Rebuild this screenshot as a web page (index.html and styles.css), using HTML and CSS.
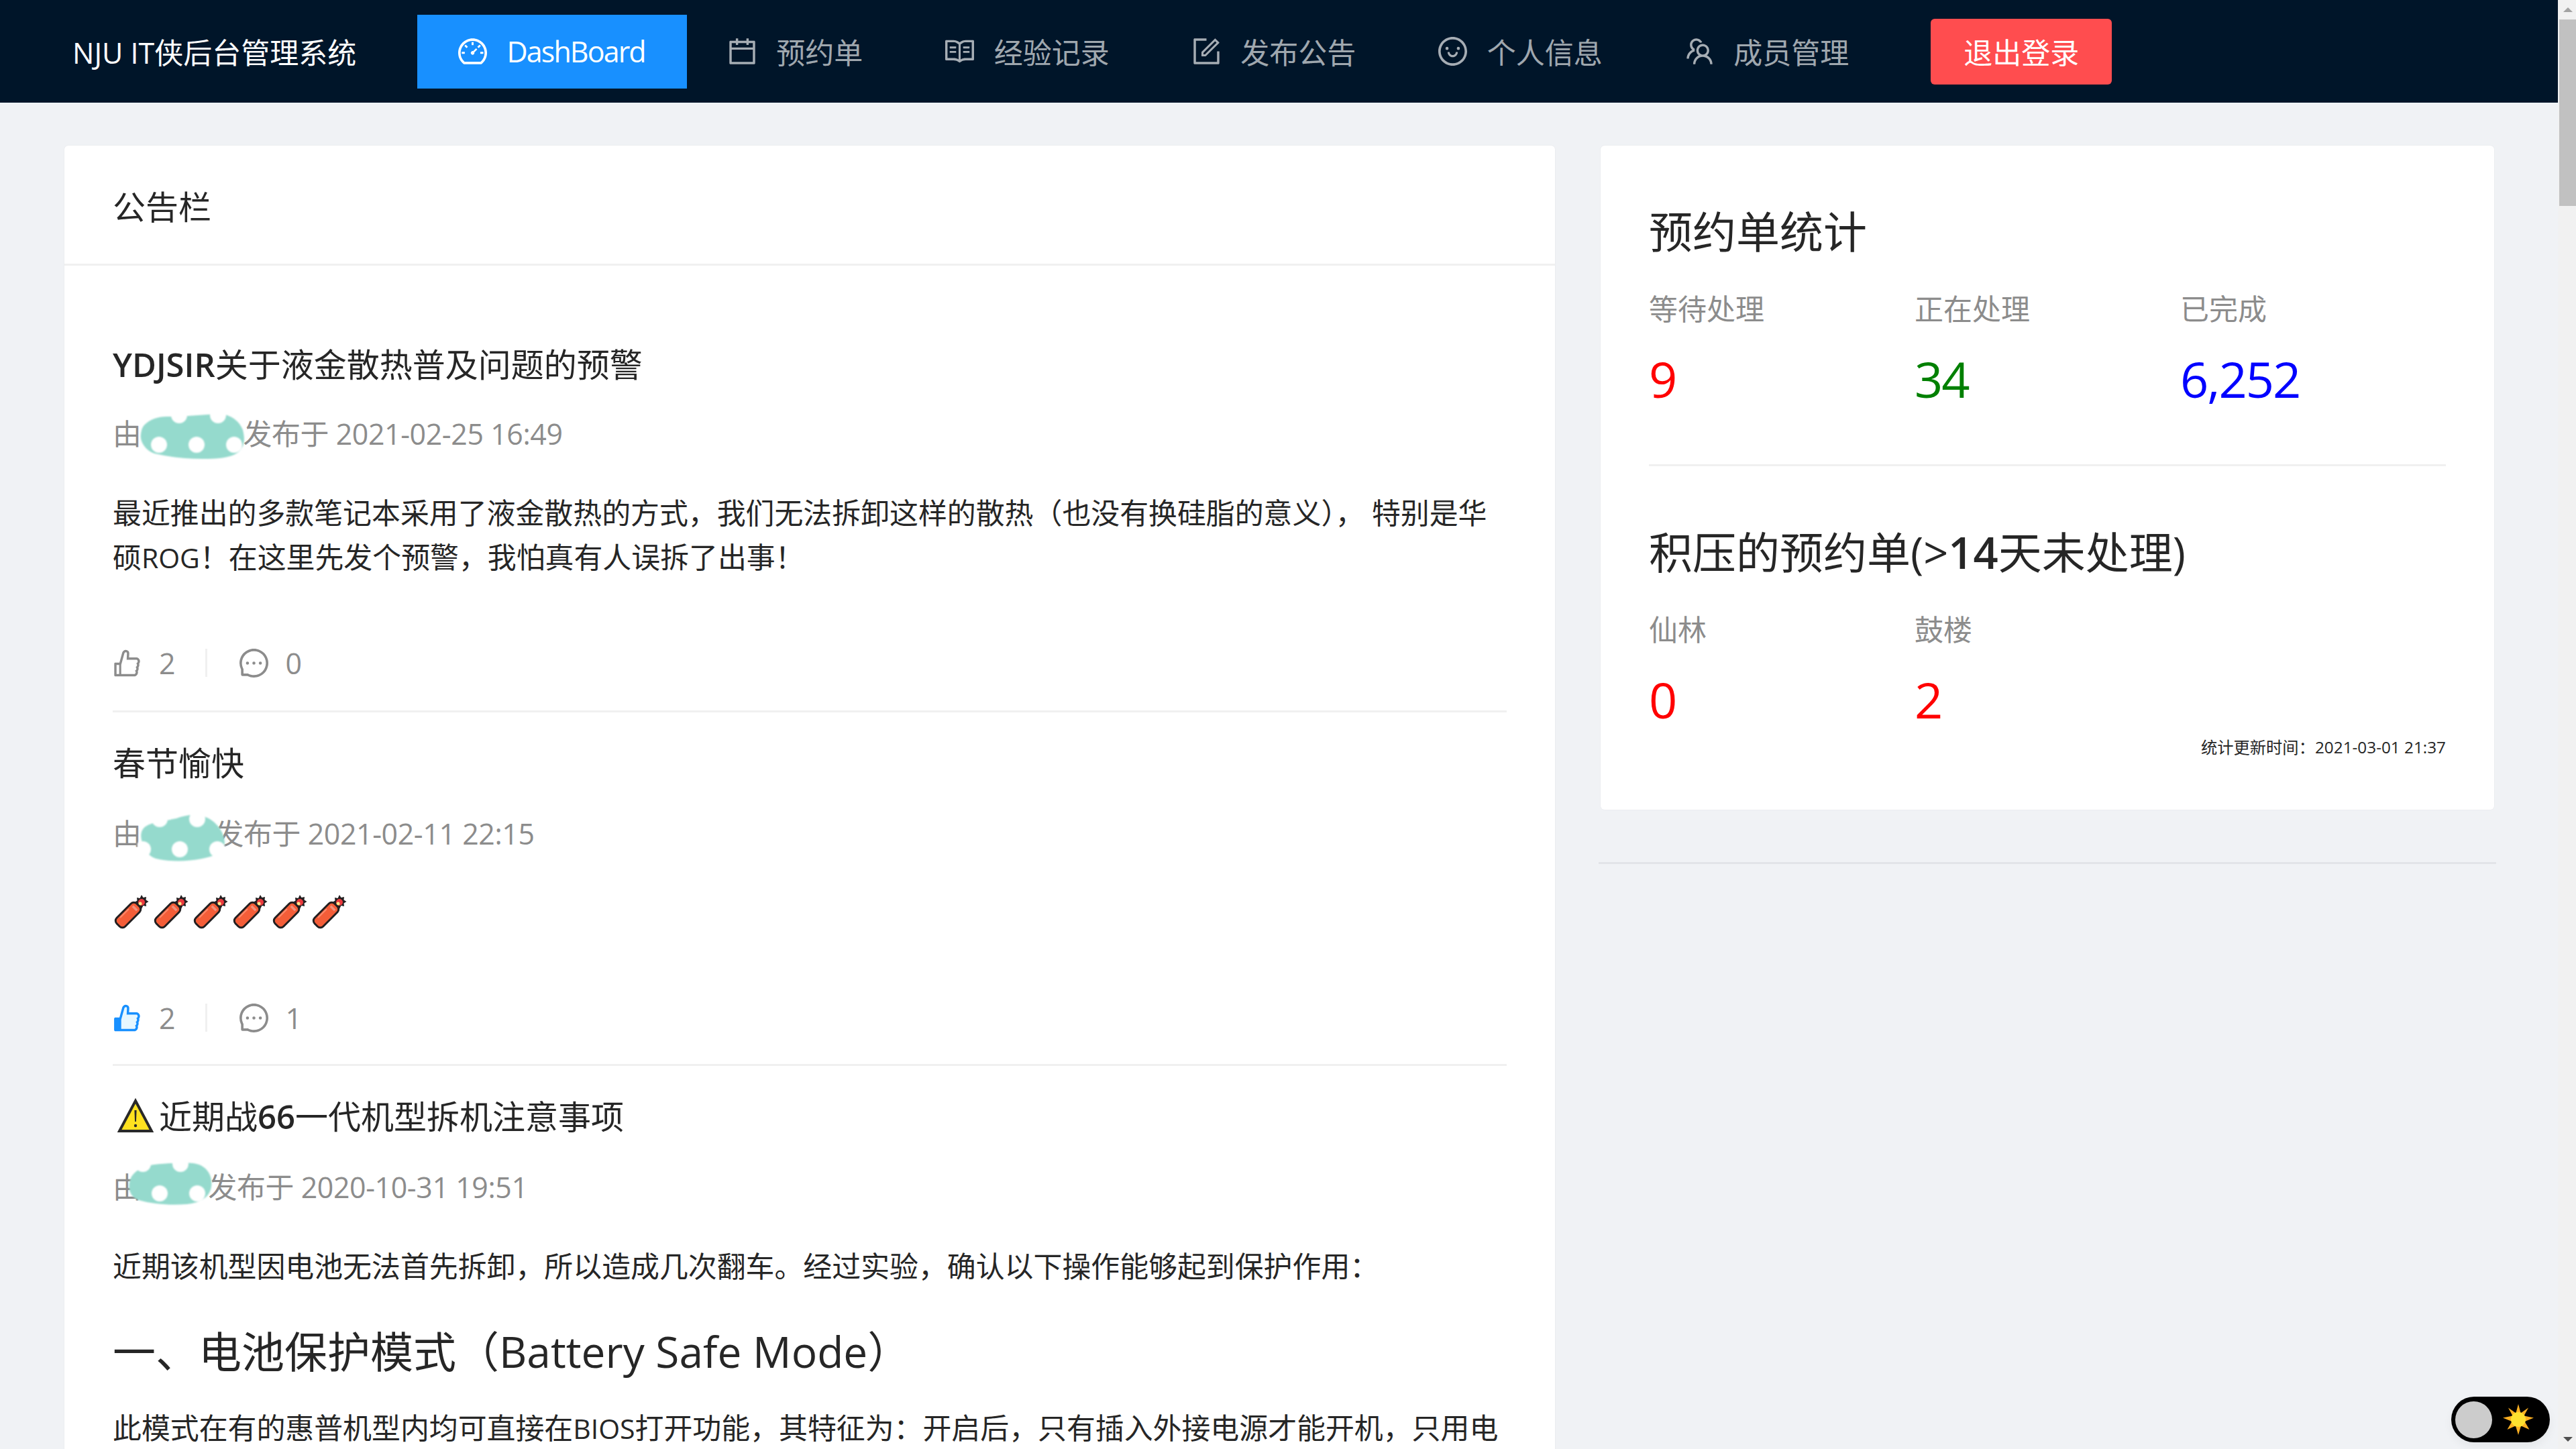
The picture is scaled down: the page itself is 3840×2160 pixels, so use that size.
FILE: index.html
```html
<!DOCTYPE html>
<html lang="zh-CN">
<head>
<meta charset="utf-8">
<title>NJU IT侠后台管理系统</title>
<link rel="stylesheet" href="styles.css">
</head>
<body>
<div class="app">
  <div class="page">
    <header class="topbar">
      <div class="logo">NJU IT侠后台管理系统</div>
      <nav class="menu">
        <a class="menu-item active"><svg class="menu-icon" viewBox="64 64 896 896"><path d="M924.8 385.6a446.7 446.7 0 00-96-142.4 446.7 446.7 0 00-142.4-96C631.1 123.8 572.5 112 512 112s-119.1 11.8-174.4 35.2a446.7 446.7 0 00-142.4 96 446.7 446.7 0 00-96 142.4C75.8 440.9 64 499.5 64 560c0 132.7 58.3 257.7 159.9 343.1l1.7 1.4c5.8 4.8 13.1 7.5 20.6 7.5h531.7c7.5 0 14.8-2.7 20.6-7.5l1.7-1.4C901.7 817.7 960 692.7 960 560c0-60.5-11.9-119.1-35.2-174.4zM761.4 836H262.6A371.12 371.12 0 01140 560c0-99.4 38.7-192.8 109-263 70.3-70.3 163.7-109 263-109 99.4 0 192.8 38.7 263 109 70.3 70.3 109 163.7 109 263 0 105.6-44.5 205.5-122.6 276zM623.5 421.5a8.03 8.03 0 00-11.3 0L527.7 506c-18.7-5-39.4-.2-54.1 14.5a55.95 55.95 0 000 79.2 55.95 55.95 0 0079.2 0 55.87 55.87 0 0014.5-54.1l84.5-84.5c3.1-3.1 3.1-8.2 0-11.3l-28.3-28.3zM490 320h44c4.4 0 8-3.6 8-8v-80c0-4.4-3.6-8-8-8h-44c-4.4 0-8 3.6-8 8v80c0 4.4 3.6 8 8 8zm260 218v44c0 4.4 3.6 8 8 8h80c4.4 0 8-3.6 8-8v-44c0-4.4-3.6-8-8-8h-80c-4.4 0-8 3.6-8 8zm12.7-197.2l-31.1-31.1a8.03 8.03 0 00-11.3 0l-56.6 56.6a8.03 8.03 0 000 11.3l31.1 31.1c3.1 3.1 8.2 3.1 11.3 0l56.6-56.6c3.1-3.1 3.1-8.2 0-11.3zm-458.6-31.1a8.03 8.03 0 00-11.3 0l-31.1 31.1a8.03 8.03 0 000 11.3l56.6 56.6c3.1 3.1 8.2 3.1 11.3 0l31.1-31.1c3.1-3.1 3.1-8.2 0-11.3l-56.6-56.6zM262 530h-80c-4.4 0-8 3.6-8 8v44c0 4.4 3.6 8 8 8h80c4.4 0 8-3.6 8-8v-44c0-4.4-3.6-8-8-8z"/></svg><span class="menu-latin">DashBoard</span></a>
        <a class="menu-item"><svg class="menu-icon" viewBox="64 64 896 896"><path d="M880 184H712v-64c0-4.4-3.6-8-8-8h-56c-4.4 0-8 3.6-8 8v64H384v-64c0-4.4-3.6-8-8-8h-56c-4.4 0-8 3.6-8 8v64H144c-17.7 0-32 14.3-32 32v664c0 17.7 14.3 32 32 32h736c17.7 0 32-14.3 32-32V216c0-17.7-14.3-32-32-32zm-40 656H184V460h656v380zM184 392V256h128v48c0 4.4 3.6 8 8 8h56c4.4 0 8-3.6 8-8v-48h256v48c0 4.4 3.6 8 8 8h56c4.4 0 8-3.6 8-8v-48h128v136H184z"/></svg><span>预约单</span></a>
        <a class="menu-item"><svg class="menu-icon" viewBox="64 64 896 896"><path d="M928 161H699.2c-49.1 0-97.1 14.1-138.4 40.7L512 233l-48.8-31.3A255.2 255.2 0 00324.8 161H96c-17.7 0-32 14.3-32 32v568c0 17.7 14.3 32 32 32h228.8c49.1 0 97.1 14.1 138.4 40.7l44.4 28.6c1.3.8 2.8 1.3 4.3 1.3s3-.4 4.3-1.3l44.4-28.6C602 807.1 650.1 793 699.2 793H928c17.7 0 32-14.3 32-32V193c0-17.7-14.3-32-32-32zM324.8 721H136V233h188.8c35.4 0 69.8 10.1 99.5 29.2l48.8 31.3 6.9 4.5v462c-47.6-25.6-100.8-39-155.2-39zm563.2 0H699.2c-54.4 0-107.6 13.4-155.2 39V298l6.9-4.5 48.8-31.3c29.7-19.1 64.1-29.2 99.5-29.2H888v488zM396.9 361H211.1c-3.9 0-7.1 3.4-7.1 7.5v45c0 4.1 3.2 7.5 7.1 7.5h185.7c3.9 0 7.1-3.4 7.1-7.5v-45c.1-4.1-3.1-7.5-7-7.5zm223.1 7.5v45c0 4.1 3.2 7.5 7.1 7.5h185.7c3.9 0 7.1-3.4 7.1-7.5v-45c0-4.1-3.2-7.5-7.1-7.5H627.1c-3.9 0-7.1 3.4-7.1 7.5zM396.9 501H211.1c-3.9 0-7.1 3.4-7.1 7.5v45c0 4.1 3.2 7.5 7.1 7.5h185.7c3.9 0 7.1-3.4 7.1-7.5v-45c.1-4.1-3.1-7.5-7-7.5zm416 0H627.1c-3.9 0-7.1 3.4-7.1 7.5v45c0 4.1 3.2 7.5 7.1 7.5h185.7c3.9 0 7.1-3.4 7.1-7.5v-45c.1-4.1-3.1-7.5-7-7.5z"/></svg><span>经验记录</span></a>
        <a class="menu-item"><svg class="menu-icon" viewBox="64 64 896 896"><path d="M904 512h-56c-4.4 0-8 3.6-8 8v320H184V184h320c4.4 0 8-3.6 8-8v-56c0-4.4-3.6-8-8-8H144c-17.7 0-32 14.3-32 32v736c0 17.7 14.3 32 32 32h736c17.7 0 32-14.3 32-32V520c0-4.4-3.6-8-8-8z"/><path d="M355.9 534.9L354 653.8c-.1 8.9 7.1 16.2 16 16.2h.4l118-2.9c2-.1 4-.9 5.4-2.3l415.9-415c3.1-3.1 3.1-8.2 0-11.3L785.4 114.3c-1.6-1.6-3.6-2.3-5.7-2.3s-4.1.8-5.7 2.3l-415.8 415a8.3 8.3 0 00-2.3 5.6zm63.5 23.6L779.7 199l45.2 45.1-360.5 359.7-45.7 1.1.7-46.4z"/></svg><span>发布公告</span></a>
        <a class="menu-item"><svg class="menu-icon" viewBox="64 64 896 896"><path d="M288 421a48 48 0 1096 0 48 48 0 10-96 0zm352 0a48 48 0 1096 0 48 48 0 10-96 0zM512 64C264.6 64 64 264.6 64 512s200.6 448 448 448 448-200.6 448-448S759.4 64 512 64zm263 711c-34.2 34.2-74 61-118.3 79.8C611 874.2 562.3 884 512 884c-50.3 0-99-9.8-144.8-29.2A370.4 370.4 0 01248.9 775c-34.2-34.2-61-74-79.8-118.3C149.8 611 140 562.3 140 512s9.8-99 29.2-144.8A370.4 370.4 0 01249 248.9c34.2-34.2 74-61 118.3-79.8C413 149.8 461.7 140 512 140c50.3 0 99 9.8 144.8 29.2A370.4 370.4 0 01775.1 249c34.2 34.2 61 74 79.8 118.3C874.2 413 884 461.7 884 512s-9.8 99-29.2 144.8A368.89 368.89 0 01775 775zM664 533h-48.1c-4.2 0-7.8 3.2-8.1 7.4C604 589.9 562.5 629 512 629s-92.1-39.1-95.8-88.6c-.3-4.2-3.9-7.4-8.1-7.4H360a8 8 0 00-8 8.4c4.4 84.3 74.5 151.6 160 151.6s155.6-67.3 160-151.6a8 8 0 00-8-8.4z"/></svg><span>个人信息</span></a>
        <a class="menu-item"><svg class="menu-icon" viewBox="64 64 896 896"><path d="M824.2 699.9a301.55 301.55 0 00-86.4-60.4C783.1 602.8 812 546.8 812 484c0-110.8-92.4-201.7-203.2-200-109.1 1.7-197 90.6-197 200 0 62.8 29 118.8 74.2 155.5a300.95 300.95 0 00-86.4 60.4C345 754.6 314 826.8 312 903.8a8 8 0 008 8.2h56c4.3 0 7.9-3.4 8-7.7 1.9-58 25.4-112.3 66.7-153.5A226.62 226.62 0 01612 684c60.9 0 118.2 23.7 161.3 66.8C814.5 792 838 846.3 840 904.3c.1 4.3 3.7 7.7 8 7.7h56a8 8 0 008-8.2c-2-77-33-149.2-87.8-203.9zM612 612c-34.2 0-66.4-13.3-90.5-37.5a126.86 126.86 0 01-37.5-91.8c.3-32.8 13.4-64.5 36.3-88 24-24.6 56.1-38.3 90.4-38.7 33.9-.3 66.8 12.9 91 36.6 24.8 24.3 38.4 56.8 38.4 91.4 0 34.2-13.3 66.3-37.5 90.5A127.3 127.3 0 01612 612zM361.5 510.4c-.9-8.7-1.4-17.5-1.4-26.4 0-15.9 1.5-31.4 4.3-46.5.7-3.6-1.2-7.3-4.5-8.8-13.6-6.1-26.1-14.5-36.9-25.1a127.54 127.54 0 01-38.7-95.4c.9-32.1 13.8-62.6 36.3-85.6 24.7-25.3 57.9-39.1 93.2-38.7 31.9.3 62.7 12.6 86 34.4 7.9 7.4 14.7 15.6 20.4 24.4 2 3.1 5.9 4.4 9.3 3.2 17.6-6.1 36.2-10.4 55.3-12.4 5.6-.6 8.8-6.6 6.3-11.6-32.5-64.3-98.9-108.7-175.7-109.9-110.9-1.7-203.3 89.2-203.3 199.9 0 62.8 28.9 118.8 74.2 155.5-31.8 14.7-61.1 35-86.5 60.4-54.8 54.7-85.8 126.9-87.8 204a8 8 0 008 8.2h56.1c4.3 0 7.9-3.4 8-7.7 1.9-58 25.4-112.3 66.7-153.5 29.4-29.4 65.4-49.8 104.7-59.7 3.9-1 6.5-4.7 6-8.7z"/></svg><span>成员管理</span></a>
      </nav>
      <button class="logout">退出登录</button>
    </header>

    <main class="content">
      <section class="card board">
        <div class="board-head">公告栏</div>
        <div class="board-body">
          <article class="post">
            <h4 class="post-title"><span class="latin">YDJSIR</span>关于液金散热普及问题的预警</h4>
            <div class="post-meta">由<span class="name name-a"><svg class="blob blob-a" viewBox="0 0 162 74"><path class="blob-fill" d="M14 18C28 6 44 8 62 8c20-1 38-3 60-4 14 0 30 8 36 24 4 16 2 26-8 34-12 8-30 9-52 9-26 0-50-3-72-8C12 58 4 44 6 34c1-8 3-12 8-16z"/><g class="blob-dots"><circle cx="33" cy="50" r="12"/><circle cx="89" cy="50" r="12"/><circle cx="145" cy="50" r="12"/><circle cx="63" cy="6" r="12"/><circle cx="121" cy="6" r="12"/></g></svg></span>发布于 2021-02-25 16:49</div>
            <p class="post-text">最近推出的多款笔记本采用了液金散热的方式，我们无法拆卸这样的散热（也没有换硅脂的意义）， 特别是华<br>硕<span class="tight">ROG</span>！在这里先发个预警，我怕真有人误拆了出事！</p>
            <div class="post-actions">
              <span class="action"><svg class="action-icon" viewBox="64 64 896 896"><path d="M885.9 533.7c16.8-22.2 26.1-49.4 26.1-77.7 0-44.9-25.1-87.4-65.5-111.1a67.67 67.67 0 00-34.3-9.3H572.4l6-122.9c1.4-29.7-9.1-57.9-29.5-79.4A106.62 106.62 0 00471 99.9c-52 0-98 35-111.8 85.1l-85.9 311H144c-17.7 0-32 14.3-32 32v364c0 17.7 14.3 32 32 32h601.3c9.2 0 18.2-1.8 26.5-5.4 47.6-20.3 78.3-66.8 78.3-118.4 0-12.6-1.8-25-5.4-37 16.8-22.2 26.1-49.4 26.1-77.7 0-12.6-1.8-25-5.4-37 16.8-22.2 26.1-49.4 26.1-77.7-.2-12.6-2-25.1-5.6-37.1zM184 852V568h81v284h-81zm636.4-353l-21.9 19 13.9 25.4a56.2 56.2 0 016.9 27.3c0 16.5-7.2 32.2-19.6 43l-21.9 19 13.9 25.4a56.2 56.2 0 016.9 27.3c0 16.5-7.2 32.2-19.6 43l-21.9 19 13.9 25.4a56.2 56.2 0 016.9 27.3c0 22.4-13.2 42.6-33.6 51.8H329V564.8l99.5-360.5a44.1 44.1 0 0142.2-32.3c7.6 0 15.1 2.2 21.1 6.7 9.9 7.4 15.2 18.6 14.6 30.5l-9.6 198.4h314.4C829 418.5 840 436.9 840 456c0 16.5-7.2 32.1-19.6 43z"/></svg><span>2</span></span>
              <span class="action-sep"></span>
              <span class="action"><svg class="action-icon" viewBox="64 64 896 896"><path d="M464 512a48 48 0 1096 0 48 48 0 10-96 0zm200 0a48 48 0 1096 0 48 48 0 10-96 0zm-400 0a48 48 0 1096 0 48 48 0 10-96 0zm661.2-173.6c-22.6-53.7-55-101.9-96.3-143.3a444.35 444.35 0 00-143.3-96.3C630.6 75.7 572.2 64 512 64h-2c-60.6.3-119.3 12.3-174.5 35.9a445.35 445.35 0 00-142 96.5c-40.9 41.3-73 89.3-95.2 142.8-23 55.4-34.6 114.3-34.3 174.9A449.4 449.4 0 00112 714v152a46 46 0 0046 46h152.1A449.4 449.4 0 00510 960h2.1c59.9 0 118-11.6 172.7-34.3a444.48 444.48 0 00142.8-95.2c41.3-40.9 73.8-88.7 96.5-142 23.6-55.2 35.6-113.9 35.9-174.5.3-60.9-11.5-120-34.8-175.6zm-151.1 438C704 845.8 611 884 512 884h-1.7c-60.3-.3-120.2-15.3-173.1-43.5l-8.4-4.5H188V695.2l-4.5-8.4C155.3 633.9 140.3 574 140 513.7c-.4-99.7 37.7-193.3 107.6-263.8 69.8-70.5 163.1-109.5 262.8-109.9h1.7c50 0 98.5 9.7 144.2 28.9 44.6 18.7 84.6 45.6 119 80 34.3 34.3 61.3 74.4 80 119 19.4 46.2 29.1 95.2 28.9 145.8-.6 99.6-39.7 192.9-110.1 262.7z"/></svg><span>0</span></span>
            </div>
          </article>

          <article class="post">
            <h4 class="post-title">春节愉快</h4>
            <div class="post-meta">由<span class="name name-b"><svg class="blob blob-b" viewBox="0 0 133 75"><path class="blob-fill" d="M12 22C24 14 40 14 58 10 74 4 92 2 106 10c14 8 24 22 24 38 0 12-14 18-34 22-24 5-52 4-68 0C14 66 8 52 6 42 4 34 6 26 12 22z"/><g class="blob-dots"><circle cx="63" cy="56" r="12"/><circle cx="119" cy="56" r="12"/><circle cx="89" cy="11" r="12"/><circle cx="33" cy="11" r="12"/><circle cx="8" cy="56" r="12"/></g></svg></span>发布于 2021-02-11 22:15</div>
            <div class="post-text firecrackers">
              <svg class="cracker" viewBox="0 0 48 48"><use href="#cracker"/></svg><svg class="cracker" viewBox="0 0 48 48"><use href="#cracker"/></svg><svg class="cracker" viewBox="0 0 48 48"><use href="#cracker"/></svg><svg class="cracker" viewBox="0 0 48 48"><use href="#cracker"/></svg><svg class="cracker" viewBox="0 0 48 48"><use href="#cracker"/></svg><svg class="cracker" viewBox="0 0 48 48"><use href="#cracker"/></svg>
            </div>
            <div class="post-actions">
              <span class="action"><svg class="action-icon" viewBox="64 64 896 896"><path class="like-fill" d="M329 852V565l99-360c5-20 24-32 43-32 22 0 37 18 36 37l-10 198h314c18 10 29 29 29 48 0 17-7 32-20 43l-22 19 14 25c5 8 7 18 7 27 0 17-7 32-20 43l-22 19 14 25c5 8 7 18 7 27 0 17-7 32-20 43l-22 19 14 25c5 8 7 18 7 27 0 22-13 43-34 52z"/><path class="like-line" d="M885.9 533.7c16.8-22.2 26.1-49.4 26.1-77.7 0-44.9-25.1-87.4-65.5-111.1a67.67 67.67 0 00-34.3-9.3H572.4l6-122.9c1.4-29.7-9.1-57.9-29.5-79.4A106.62 106.62 0 00471 99.9c-52 0-98 35-111.8 85.1l-85.9 311H144c-17.7 0-32 14.3-32 32v364c0 17.7 14.3 32 32 32h601.3c9.2 0 18.2-1.8 26.5-5.4 47.6-20.3 78.3-66.8 78.3-118.4 0-12.6-1.8-25-5.4-37 16.8-22.2 26.1-49.4 26.1-77.7 0-12.6-1.8-25-5.4-37 16.8-22.2 26.1-49.4 26.1-77.7-.2-12.6-2-25.1-5.6-37.1zM820.4 499l-21.9 19 13.9 25.4a56.2 56.2 0 016.9 27.3c0 16.5-7.2 32.2-19.6 43l-21.9 19 13.9 25.4a56.2 56.2 0 016.9 27.3c0 16.5-7.2 32.2-19.6 43l-21.9 19 13.9 25.4a56.2 56.2 0 016.9 27.3c0 22.4-13.2 42.6-33.6 51.8H329V564.8l99.5-360.5a44.1 44.1 0 0142.2-32.3c7.6 0 15.1 2.2 21.1 6.7 9.9 7.4 15.2 18.6 14.6 30.5l-9.6 198.4h314.4C829 418.5 840 436.9 840 456c0 16.5-7.2 32.1-19.6 43z"/><path class="like-line" d="M112 528h153v364H112z"/></svg><span>2</span></span>
              <span class="action-sep"></span>
              <span class="action"><svg class="action-icon" viewBox="64 64 896 896"><path d="M464 512a48 48 0 1096 0 48 48 0 10-96 0zm200 0a48 48 0 1096 0 48 48 0 10-96 0zm-400 0a48 48 0 1096 0 48 48 0 10-96 0zm661.2-173.6c-22.6-53.7-55-101.9-96.3-143.3a444.35 444.35 0 00-143.3-96.3C630.6 75.7 572.2 64 512 64h-2c-60.6.3-119.3 12.3-174.5 35.9a445.35 445.35 0 00-142 96.5c-40.9 41.3-73 89.3-95.2 142.8-23 55.4-34.6 114.3-34.3 174.9A449.4 449.4 0 00112 714v152a46 46 0 0046 46h152.1A449.4 449.4 0 00510 960h2.1c59.9 0 118-11.6 172.7-34.3a444.48 444.48 0 00142.8-95.2c41.3-40.9 73.8-88.7 96.5-142 23.6-55.2 35.6-113.9 35.9-174.5.3-60.9-11.5-120-34.8-175.6zm-151.1 438C704 845.8 611 884 512 884h-1.7c-60.3-.3-120.2-15.3-173.1-43.5l-8.4-4.5H188V695.2l-4.5-8.4C155.3 633.9 140.3 574 140 513.7c-.4-99.7 37.7-193.3 107.6-263.8 69.8-70.5 163.1-109.5 262.8-109.9h1.7c50 0 98.5 9.7 144.2 28.9 44.6 18.7 84.6 45.6 119 80 34.3 34.3 61.3 74.4 80 119 19.4 46.2 29.1 95.2 28.9 145.8-.6 99.6-39.7 192.9-110.1 262.7z"/></svg><span>1</span></span>
            </div>
          </article>

          <article class="post post-last">
            <h4 class="post-title"><svg class="warn" viewBox="0 0 54 52"><path d="M27 4 51 49H3z" fill="#fee11f" stroke="#292929" stroke-width="4"/><path d="M25.4 18h3.2l-.7 17h-1.8z" fill="#292929"/><circle cx="27" cy="41" r="2.2" fill="#292929"/></svg>近期战<span class="latin">66</span>一代机型拆机注意事项</h4>
            <div class="post-meta">由<span class="name name-c"><svg class="blob blob-c" viewBox="0 0 131 68"><path class="blob-fill" d="M8 26C14 14 30 6 54 5c20-1 44-4 58 2 12 6 18 18 16 32-2 14-14 24-36 26-24 2-52 0-72-6C6 54 2 40 8 26z"/><g class="blob-dots"><circle cx="51" cy="49" r="12"/><circle cx="107" cy="49" r="12"/><circle cx="26" cy="5" r="12"/><circle cx="82" cy="5" r="12"/></g></svg></span>发布于 2020-10-31 19:51</div>
            <p class="post-text">近期该机型因电池无法首先拆卸，所以造成几次翻车。经过实验，确认以下操作能够起到保护作用：</p>
            <h2 class="post-heading">一、电池保护模式（<span class="heading-latin">Battery Safe Mode</span>）</h2>
            <p class="post-para">此模式在有的惠普机型内均可直接在<span class="tight">BIOS</span>打开功能，其特征为：开启后，只有插入外接电源才能开机，只用电</p>
          </article>
        </div>
      </section>

      <aside class="side">
        <section class="card stats">
          <h3 class="stats-title">预约单统计</h3>
          <div class="stat-grid">
            <div class="stat"><div class="stat-label">等待处理</div><div class="stat-value red">9</div></div>
            <div class="stat"><div class="stat-label">正在处理</div><div class="stat-value green">34</div></div>
            <div class="stat"><div class="stat-label">已完成</div><div class="stat-value blue">6,252</div></div>
          </div>
          <hr class="stats-rule">
          <h3 class="stats-title stats-title-second">积压的预约单(&gt;<span class="latin">14</span>天未处理)</h3>
          <div class="stat-grid">
            <div class="stat"><div class="stat-label">仙林</div><div class="stat-value red">0</div></div>
            <div class="stat"><div class="stat-label">鼓楼</div><div class="stat-value red">2</div></div>
          </div>
          <div class="updated">统计更新时间：2021-03-01 21:37</div>
        </section>
        <hr class="side-rule">
      </aside>
    </main>

    <div class="theme-toggle">
      <span class="knob"></span>
      <svg class="sun" viewBox="0 0 48 48"><path d="M24 1l3.600 13.500L39 6.500l-6.500 12L47 21.500l-13.500 5.500L40.500 39 28 33.500 24 47l-4-13.500L7.500 39 14.500 27 1 21.500l14.500-3L9 6.500l11.400 8z" fill="#fdb022"/><circle cx="24" cy="24" r="11" fill="#fde030"/></svg>
    </div>
  </div>

  <div class="scrollbar">
    <span class="scroll-btn"><span class="arrow-up"></span></span>
    <span class="scroll-thumb"></span>
    <span class="scroll-track"></span>
    <span class="scroll-btn"><span class="arrow-down"></span></span>
  </div>
</div>

<svg class="defs" width="0" height="0">
  <defs>
    <g id="cracker">
      <path d="M33 14 L30 17" stroke="#555" stroke-width="2"/>
      <path d="M38 -1l2.500 4 4.500-1-.5 4.500 4 2.500-4 2.500.5 4.500-4.500-1L38 20l-2.500-4-4.500 1 .5-4.500-4-2.500 4-2.500-.5-4.500 4.500 1z" transform="translate(0 1)" fill="#231f20"/>
      <circle cx="38" cy="11" r="5" fill="#ea3a3e"/>
      <circle cx="36" cy="13" r="2.500" fill="#fde68a"/>
      <rect x="-21" y="-9" width="42" height="18" rx="6" transform="translate(18 30) rotate(-45)" fill="#f45d38" stroke="#231f20" stroke-width="3"/>
      <path d="M26 15.500 32.500 22 30 24.500 23.500 18z" fill="#f0907c"/>
      <path d="M6 34 19 21" stroke="#f98a6c" stroke-width="2" fill="none"/>
    </g>
  </defs>
</svg>
</body>
</html>
```

FILE: styles.css
```css
* { box-sizing: border-box; }
html, body { margin: 0; padding: 0; height: 2160px; overflow: hidden; }
body {
  font-family: "Open Sans", "Noto Sans CJK SC", sans-serif;
  font-size: 42.9px;
  color: #262626;
  background: #f0f2f5;
}
h2, h3, h4, p, hr { margin: 0; padding: 0; font-weight: 400; }
hr { border: 0; }

.app { display: flex; height: 2160px; }
.page { position: relative; flex: 1; min-width: 0; height: 2160px; overflow: hidden; }

/* top navigation */
.topbar { display: flex; align-items: center; height: 153px; background: #001529; padding-left: 108px; }
.logo { width: 514px; color: #fff; font-size: 43px; white-space: nowrap; }
.menu { display: flex; }
.menu-item { display: flex; align-items: center; height: 110px; padding: 0 62px 0 61px; font-size: 43px; color: rgba(255,255,255,.65); white-space: nowrap; }
.menu-item.active { background: #1890ff; color: #fff; }
.menu-latin { letter-spacing: -1.9px; }
.menu-icon { width: 43px; height: 43px; margin-right: 29.5px; fill: currentColor; }
.logout { width: 270px; height: 98px; margin-left: 60px; padding: 0; border: 0; border-radius: 6px; background: #ff4d4f; color: #fff; font: inherit; font-size: 43px; }

/* main columns */
.content { display: grid; grid-template-columns: 2222px 1332px; column-gap: 68px; padding: 64px 0 0 96px; align-items: start; }
.card { background: #fff; border-radius: 6px; box-shadow: 0 0 0 1px rgba(0,0,0,.02); }

/* notice board */
.board-head { display: flex; align-items: center; height: 179px; padding: 0 72px; font-size: 49px; border-bottom: 3px solid #f0f0f0; }
.board-body { padding: 72px 72px 0; }
.post { padding-top: 42px; border-bottom: 3px solid #f0f0f0; }
.post-last { border-bottom: 0; padding-bottom: 120px; }
.post-title { font-size: 49px; line-height: 66px; color: #262626; white-space: nowrap; }
.latin { font-weight: 600; }
.tight { font-size: 41px; }
.warn { width: 54px; height: 52px; margin: 0 8px 0 7px; vertical-align: -6px; }
.post-meta { margin-top: 38px; line-height: 66px; color: #8c8c8c; letter-spacing: -.4px; white-space: nowrap; }
.post + .post .post-meta { margin-top: 40px; }
.name { position: relative; display: inline-block; height: 66px; vertical-align: top; }
.name-a { width: 152px; }
.name-b { width: 110px; }
.name-c { width: 100px; }
.blob { position: absolute; filter: blur(1.2px); }
.blob-a { width: 164px; height: 74px; left: -8px; top: -1px; }
.blob-b { width: 133px; height: 75px; left: -6px; top: 0; }
.blob-c { width: 131px; height: 68px; left: -24px; top: -7px; }
.blob-fill { fill: #95dacd; }
.blob-dots { fill: #fff; }
.post-text { margin-top: 52px; line-height: 66px; color: #262626; }
.firecrackers { display: flex; gap: 11px; height: 64px; margin-top: 50px; padding-left: 5px; align-items: center; }
.cracker { width: 48px; height: 48px; overflow: visible; }
.post-actions { display: flex; align-items: center; height: 66px; margin: 91px 0 38px; color: #8c8c8c; }
.firecrackers + .post-actions { margin: 94px 0 36px; }
.action { display: flex; align-items: center; }
.action-icon { width: 43px; height: 43px; margin-right: 26px; fill: currentColor; }
.action-sep { width: 3px; height: 42px; margin: 0 48px 0 44px; background: #f0f0f0; }
.like-fill { fill: #e6f7ff; }
.like-line { fill: #1890ff; }
.post-heading { margin: 61px 0 48px; font-size: 64px; line-height: 66px; white-space: nowrap; }
.heading-latin { font-weight: 500; }
.post-para { line-height: 66px; }

/* statistics */
.side { display: flex; flex-direction: column; }
.stats { height: 990px; padding: 83px 72px 0; }
.stats-title { font-size: 65px; line-height: 90px; color: #262626; white-space: nowrap; }
.stat-grid { display: grid; grid-template-columns: repeat(3, 396px); margin-top: 38px; font-size: 43px; }
.stat-label { line-height: 66px; color: #8c8c8c; }
.stat-value { margin-top: 26px; font-size: 74px; line-height: 90px; letter-spacing: -2px; }
.red { color: #f00; }
.green { color: #008000; }
.blue { color: #00f; }
.stats-rule { height: 3px; margin-top: 82px; background: #f0f0f0; }
.stats-title-second { margin-top: 83px; }
.updated { margin-top: 8px; font-size: 24.3px; line-height: 36px; text-align: right; color: #262626; }
.side-rule { height: 3px; margin: 78px -3px 0; background: #e2e4e8; }

/* theme switch */
.theme-toggle { position: absolute; right: 12px; bottom: 10px; display: flex; align-items: center; width: 147px; height: 68px; padding-left: 6px; border-radius: 34px; background: #000; box-shadow: 0 6px 14px rgba(0,0,0,.05); }
.knob { width: 55px; height: 55px; border-radius: 50%; background: #ccc; }
.sun { width: 48px; height: 48px; margin-left: 15px; }

/* scrollbar */
.scrollbar { display: flex; flex-direction: column; width: 27px; height: 2160px; background: #f1f1f1; }
.scroll-btn { display: flex; align-items: center; justify-content: center; height: 29px; padding-left: 2px; }
.scroll-thumb { height: 278px; margin-left: 2px; background: #c1c1c1; }
.scroll-track { flex: 1; }
.arrow-up { width: 0; height: 0; border-left: 7px solid transparent; border-right: 7px solid transparent; border-bottom: 7px solid #a3a3a3; }
.arrow-down { width: 0; height: 0; border-left: 7px solid transparent; border-right: 7px solid transparent; border-top: 7px solid #505050; }
.defs { display: block; }
```
